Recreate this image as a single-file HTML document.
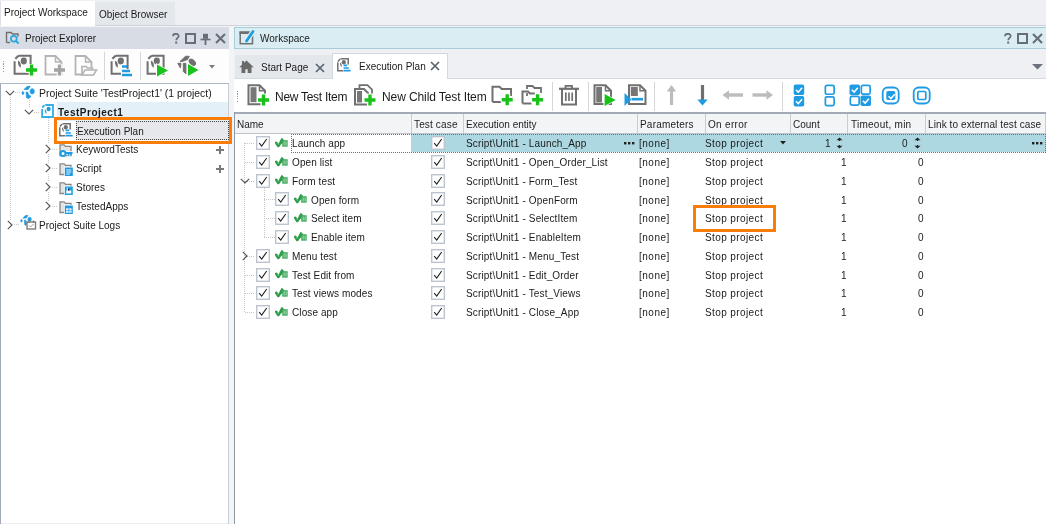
<!DOCTYPE html>
<html><head><meta charset="utf-8"><style>
html,body{margin:0;padding:0;}
body{width:1046px;height:524px;overflow:hidden;position:relative;font-family:"Liberation Sans", sans-serif;}
.t{white-space:pre;line-height:1;will-change:transform;}
div,svg{position:absolute;}
</style></head><body>
<div style="left:0px;top:0px;width:1046px;height:524px;background:#f3f4f6"></div><div style="left:0px;top:0px;width:1046px;height:26px;background:#eff0f3"></div><div style="left:0px;top:25px;width:1046px;height:1px;background:#ccd3dd"></div><div style="left:0px;top:1px;width:1px;height:25px;background:#dde1e7"></div><div style="left:1px;top:1px;width:94px;height:25px;background:#ffffff"></div><div style="left:95px;top:2px;width:80px;height:23px;background:#e4e7ec"></div><div class="t" style="left:3.5px;top:8px;font-size:10px;color:#1a1a1a;">Project Workspace</div><div class="t" style="left:99px;top:10px;font-size:10px;color:#1a1a1a;">Object Browser</div><div style="left:0px;top:27px;width:229px;height:22px;background:#d8dce4"></div><div class="t" style="left:24.5px;top:34px;font-size:10px;color:#1a1a1a;">Project Explorer</div><svg style="left:5px;top:30px" width="16" height="15" viewBox="0 0 16 15"><path d="M1.5 12.5V2.5h4.5l1.5 1.5h5.5v2.5" fill="none" stroke="#707070" stroke-width="1.4"/><path d="M1.5 12.5h3.5" stroke="#707070" stroke-width="1.4"/><circle cx="8.8" cy="8.8" r="2.9" fill="none" stroke="#29a8e0" stroke-width="1.7"/><path d="M10.8 10.8l2.8 2.8" stroke="#29a8e0" stroke-width="2"/></svg><svg style="left:172px;top:33px" width="8" height="11" viewBox="0 0 8 11"><path d="M1 3.2C1 1.5 2.2 0.8 3.8 0.8S6.7 1.6 6.7 3.1C6.7 4.8 4.2 5.1 4.2 7.2" fill="none" stroke="#676d76" stroke-width="1.7"/><rect x="3.2" y="8.6" width="2" height="2" fill="#676d76"/></svg><div style="left:185px;top:33px;width:11px;height:11px;border:2px solid #676d76;box-sizing:border-box"></div><svg style="left:200px;top:33px" width="11" height="12" viewBox="0 0 11 12"><path d="M3 0.8h5v5H3z" fill="#676d76"/><path d="M0.5 6.5h10" stroke="#676d76" stroke-width="1.6"/><path d="M5.5 6v6" stroke="#676d76" stroke-width="1.8"/></svg><svg style="left:215px;top:33px" width="11" height="11" viewBox="0 0 11 11"><path d="M1 1l9 9M10 1l-9 9" stroke="#676d76" stroke-width="2.1"/></svg><div style="left:0px;top:49px;width:229px;height:34px;background:#fdfdfd"></div><div style="left:3px;top:61.0px;width:1px;height:1.3px;background:#9a9a9a"></div><div style="left:3px;top:63.4px;width:1px;height:1.3px;background:#9a9a9a"></div><div style="left:3px;top:65.8px;width:1px;height:1.3px;background:#9a9a9a"></div><div style="left:3px;top:68.2px;width:1px;height:1.3px;background:#9a9a9a"></div><div style="left:3px;top:70.6px;width:1px;height:1.3px;background:#9a9a9a"></div><svg style="left:13px;top:54px" width="24" height="23" viewBox="0 0 24 23"><path d="M6 1.8h11.6v18H1.6V7.2" fill="none" stroke="#707070" stroke-width="2"/><path d="M5.8 1.5L2.3 4.8" stroke="#707070" stroke-width="2.2"/><ellipse cx="10.8" cy="7" rx="3.1" ry="3.4" fill="#707070"/><path d="M5 6.8c2 0.6 3.5 3.3 2.6 7c-1.6-0.8-3-3.3-2.6-7z" fill="#707070"/><path d="M18.5 10v12M12.5 16h12" stroke="#fff" stroke-width="5.5"/><path d="M18.5 10.5v11M13.0 16h11" stroke="#19c219" stroke-width="3.4"/></svg><svg style="left:44px;top:54px" width="24" height="23" viewBox="0 0 24 23"><path d="M1.5 2h10l6 6v12.5h-16z" fill="none" stroke="#b4b4b4" stroke-width="1.8"/><path d="M11.5 2v6h6" fill="none" stroke="#b4b4b4" stroke-width="1.5"/><path d="M15.5 10v12M9.5 16h12" stroke="#fff" stroke-width="5.5"/><path d="M15.5 10.5v11M10.0 16h11" stroke="#a3a3a3" stroke-width="3.4"/></svg><svg style="left:74px;top:54px" width="24" height="23" viewBox="0 0 24 23"><path d="M1.5 2h10l6 6v12.5h-16z" fill="none" stroke="#b4b4b4" stroke-width="1.8"/><path d="M11.5 2v6h6" fill="none" stroke="#b4b4b4" stroke-width="1.5"/><path d="M8 21V12.5h4l1.5 1.5h5v2" fill="#fff" stroke="#b4b4b4" stroke-width="1.6"/><path d="M8 21l3-5h11.5l-3 5z" fill="#fff" stroke="#b4b4b4" stroke-width="1.6"/></svg><div style="left:104px;top:52px;width:1px;height:28px;background:#d6d6d6"></div><svg style="left:110px;top:54px" width="23" height="23" viewBox="0 0 23 23"><path d="M6 1.8h11.6v18H1.6V7.2" fill="none" stroke="#707070" stroke-width="2"/><path d="M5.8 1.5L2.3 4.8" stroke="#707070" stroke-width="2.2"/><ellipse cx="10.8" cy="7" rx="3.1" ry="3.4" fill="#707070"/><path d="M5 6.8c2 0.6 3.5 3.3 2.6 7c-1.6-0.8-3-3.3-2.6-7z" fill="#707070"/><path d="M11 12.5h5M11 17h8M11 21h11" stroke="#fff" stroke-width="4"/><path d="M12 12.5h5M12 17h8M12 21h10" stroke="#1e9be2" stroke-width="2.4"/></svg><div style="left:140px;top:52px;width:1px;height:28px;background:#d6d6d6"></div><svg style="left:146px;top:54px" width="23" height="23" viewBox="0 0 23 23"><path d="M6 1.8h11.6v18H1.6V7.2" fill="none" stroke="#707070" stroke-width="2"/><path d="M5.8 1.5L2.3 4.8" stroke="#707070" stroke-width="2.2"/><ellipse cx="10.8" cy="7" rx="3.1" ry="3.4" fill="#707070"/><path d="M5 6.8c2 0.6 3.5 3.3 2.6 7c-1.6-0.8-3-3.3-2.6-7z" fill="#707070"/><path d="M10 9l13 7.5-13 7.5z" fill="#fff"/><path d="M11 10.5l11 6-11 6z" fill="#19c219"/></svg><svg style="left:177px;top:54px" width="23" height="23" viewBox="0 0 23 23"><g fill="#707070" stroke="#707070" stroke-width="1" stroke-linejoin="round"><path d="M3 7.5L8.5 2.3L12.3 2.3L10.5 5.5L5 7.5Z"/><ellipse cx="15.3" cy="8.3" rx="3.8" ry="2.3" transform="rotate(45 15.3 8.3)"/><path d="M0.8 9.3h3.2l-0.6 4.6z"/><path d="M6.3 9.3h2.6v10.5l-2.6-2.3z"/></g><path d="M10 8.5l13 7.5-13 7.5z" fill="#fff"/><path d="M11 10l10.5 6-10.5 6z" fill="#19c219"/></svg><svg style="left:209px;top:65px" width="6" height="4" viewBox="0 0 6 4"><path d="M0 0h6l-3 3.5z" fill="#7a7a7a"/></svg><div style="left:0px;top:83px;width:229px;height:441px;background:#ffffff"></div><div style="left:0px;top:83px;width:1px;height:441px;background:#9ea8b6"></div><div style="left:0px;top:83px;width:229px;height:1px;background:#aeb6c3"></div><div style="left:228px;top:84px;width:1px;height:440px;background:#c9ced6"></div><div style="left:1px;top:523px;width:227px;height:1px;background:#eceef1"></div><div style="left:57px;top:102px;width:171px;height:15px;background:#e3f0f7"></div><div style="left:57px;top:120px;width:172px;height:1px;background:#e3f0f7"></div><div style="left:76px;top:121px;width:153px;height:19px;background:#e6e8ec"></div><div style="left:54px;top:117px;width:178px;height:27px;border:3px solid #fa7d0a;box-sizing:border-box"></div><div style="left:76px;top:121px;width:153px;height:19px;border:1px dotted #444;box-sizing:border-box"></div><div style="left:10px;top:97px;width:1px;height:123px;background:repeating-linear-gradient(to bottom,#c6c6c6 0 1px,transparent 1px 2px)"></div><div style="left:29px;top:100px;width:1px;height:8px;background:repeating-linear-gradient(to bottom,#c6c6c6 0 1px,transparent 1px 2px)"></div><div style="left:48px;top:118px;width:1px;height:88px;background:repeating-linear-gradient(to bottom,#c6c6c6 0 1px,transparent 1px 2px)"></div><div style="left:15px;top:92px;width:6px;height:1px;background:repeating-linear-gradient(to right,#c6c6c6 0 1px,transparent 1px 2px)"></div><div style="left:34px;top:112px;width:6px;height:1px;background:repeating-linear-gradient(to right,#c6c6c6 0 1px,transparent 1px 2px)"></div><div style="left:52px;top:149px;width:6px;height:1px;background:repeating-linear-gradient(to right,#c6c6c6 0 1px,transparent 1px 2px)"></div><div style="left:52px;top:168px;width:6px;height:1px;background:repeating-linear-gradient(to right,#c6c6c6 0 1px,transparent 1px 2px)"></div><div style="left:52px;top:187px;width:6px;height:1px;background:repeating-linear-gradient(to right,#c6c6c6 0 1px,transparent 1px 2px)"></div><div style="left:52px;top:206px;width:6px;height:1px;background:repeating-linear-gradient(to right,#c6c6c6 0 1px,transparent 1px 2px)"></div><div style="left:10px;top:224px;width:10px;height:1px;background:repeating-linear-gradient(to right,#c6c6c6 0 1px,transparent 1px 2px)"></div><svg style="left:5px;top:89px" width="10" height="8" viewBox="0 0 10 8"><rect x="0" y="0" width="10" height="8" fill="#fff"/><path d="M0.8 1.8l4.2 4.2 4.2-4.2" fill="none" stroke="#555" stroke-width="1.15"/></svg><svg style="left:24px;top:108px" width="10" height="8" viewBox="0 0 10 8"><rect x="0" y="0" width="10" height="8" fill="#fff"/><path d="M0.8 1.8l4.2 4.2 4.2-4.2" fill="none" stroke="#555" stroke-width="1.15"/></svg><svg style="left:44px;top:144px" width="8" height="10" viewBox="0 0 8 10"><rect x="0" y="0" width="8" height="10" fill="#fff"/><path d="M1.8 0.8l4.2 4.2-4.2 4.2" fill="none" stroke="#555" stroke-width="1.15"/></svg><svg style="left:44px;top:163px" width="8" height="10" viewBox="0 0 8 10"><rect x="0" y="0" width="8" height="10" fill="#fff"/><path d="M1.8 0.8l4.2 4.2-4.2 4.2" fill="none" stroke="#555" stroke-width="1.15"/></svg><svg style="left:44px;top:182px" width="8" height="10" viewBox="0 0 8 10"><rect x="0" y="0" width="8" height="10" fill="#fff"/><path d="M1.8 0.8l4.2 4.2-4.2 4.2" fill="none" stroke="#555" stroke-width="1.15"/></svg><svg style="left:44px;top:201px" width="8" height="10" viewBox="0 0 8 10"><rect x="0" y="0" width="8" height="10" fill="#fff"/><path d="M1.8 0.8l4.2 4.2-4.2 4.2" fill="none" stroke="#555" stroke-width="1.15"/></svg><svg style="left:6px;top:220px" width="8" height="10" viewBox="0 0 8 10"><rect x="0" y="0" width="8" height="10" fill="#fff"/><path d="M1.8 0.8l4.2 4.2-4.2 4.2" fill="none" stroke="#555" stroke-width="1.15"/></svg><svg style="left:21px;top:85px" width="15" height="15" viewBox="0 0 15 15"><g fill="#1e9be2" stroke="#1e9be2" stroke-width="0.8" stroke-linejoin="round"><path d="M3 4.6L6 1.6L9.2 1.2L7.2 4.4Z"/><ellipse cx="11.2" cy="6.3" rx="2.1" ry="2.6"/><ellipse cx="1.9" cy="8" rx="0.9" ry="1.5"/><path d="M5.2 7L6.6 7L7.5 9.6L10 11.5L7.6 13.5L5.4 12.5Z"/></g></svg><svg style="left:41px;top:104px" width="14" height="15" viewBox="0 0 14 15"><path d="M4.3 1H12V13H1.1V5" fill="none" stroke="#35aee8" stroke-width="1.8"/><path d="M3.6 1.1L1.2 3.5" stroke="#35aee8" stroke-width="1.8"/><ellipse cx="7.6" cy="5" rx="2.1" ry="2.3" fill="#1e9be2"/><path d="M3.7 5.2c1.3 0.5 2.1 2.3 1.8 4.6c-1.2-0.6-2-2.4-1.8-4.6z" fill="#1e9be2"/></svg><svg style="left:59px;top:123px" width="15" height="15" viewBox="0 0 15 15"><path d="M3.6 0.8H11.2V6.5M0.8 4.2V12.8H6.2" fill="none" stroke="#707070" stroke-width="1.5"/><path d="M0.9 3.4L3.3 1" stroke="#707070" stroke-width="1.5"/><ellipse cx="6.8" cy="4.3" rx="2.1" ry="2.3" fill="#707070"/><path d="M3 4.6c1.3 0.5 2 2.2 1.7 4.4c-1.1-0.6-1.9-2.3-1.7-4.4z" fill="#707070"/><path d="M6.6 7.4h3.6M6.6 10h5.2M6.6 12.6h7" stroke="#1e9be2" stroke-width="1.7"/></svg><svg style="left:59px;top:143px" width="14" height="14" viewBox="0 0 14 14"><path d="M1 12.5V1.8h4l1.5 1.5h5.5v9.2z" fill="#e4e4e4" stroke="#888" stroke-width="1.3"/><path d="M5 10h8.5M9.5 10v2.5M12 10v2.5" stroke="#fff" stroke-width="3.5"/><circle cx="4" cy="10.5" r="2.5" fill="#fff" stroke="#1e9be2" stroke-width="2"/><path d="M6 10h7.5M9.5 10v2.5M12 10v2.5" stroke="#1e9be2" stroke-width="1.8"/></svg><svg style="left:59px;top:162px" width="14" height="14" viewBox="0 0 14 14"><path d="M1 12.5V1.8h4l1.5 1.5h5.5v9.2z" fill="#e4e4e4" stroke="#888" stroke-width="1.3"/><rect x="5" y="4.8" width="9" height="9.2" fill="#fff"/><rect x="5.8" y="5.5" width="8" height="8.5" fill="#1e9be2"/><path d="M7.3 8h5M7.3 10h5M7.3 12h3.5" stroke="#fff" stroke-width="0.9"/></svg><svg style="left:59px;top:181px" width="14" height="14" viewBox="0 0 14 14"><path d="M1 12.5V1.8h4l1.5 1.5h5.5v9.2z" fill="#e4e4e4" stroke="#888" stroke-width="1.3"/><rect x="5" y="4.8" width="9" height="9.2" fill="#fff"/><rect x="5.8" y="5.5" width="8" height="8.5" fill="#1e9be2"/><path d="M7.3 9.5h5v3h-5z" fill="#fff"/><path d="M8.3 6.5v3.5h3" stroke="#fff" stroke-width="1"/></svg><svg style="left:59px;top:200px" width="14" height="14" viewBox="0 0 14 14"><path d="M1 12.5V1.8h4l1.5 1.5h5.5v9.2z" fill="#e4e4e4" stroke="#888" stroke-width="1.3"/><rect x="5" y="4.8" width="9" height="9.2" fill="#fff"/><rect x="5.8" y="5.5" width="8" height="8.5" fill="#1e9be2"/><rect x="7" y="8.3" width="5.6" height="4.5" fill="#dff1fb"/><path d="M7 10.5h5.6M9.8 8.3v4.5" stroke="#1e9be2" stroke-width="0.6"/></svg><svg style="left:20px;top:214px" width="17" height="16" viewBox="0 0 17 16"><g fill="#1e9be2" stroke="#1e9be2" stroke-width="0.6" stroke-linejoin="round"><path d="M2.8 4.2L5.3 1.6L8 1.3L6.4 4Z"/><ellipse cx="9.6" cy="5.3" rx="1.7" ry="2.1"/><ellipse cx="1.5" cy="6.8" rx="0.8" ry="1.3"/><path d="M4.5 6L5.7 6L6.4 8.2L7.5 9.5L5.5 11.5L4.6 10.5Z"/></g><rect x="7" y="8" width="8.5" height="7" fill="#fff" stroke="#7d7d7d" stroke-width="1.4"/><path d="M9 6.5v2.5M13.5 6.5v2.5" stroke="#7d7d7d" stroke-width="1.4"/><path d="M9 11.5l1.5 1.5 3-3" stroke="#9a9a9a" stroke-width="1" fill="none"/></svg><svg style="left:216px;top:146px" width="8" height="8" viewBox="0 0 8 8"><path d="M4 0v8M0 4h8" stroke="#7a7a7a" stroke-width="2"/></svg><svg style="left:216px;top:165px" width="8" height="8" viewBox="0 0 8 8"><path d="M4 0v8M0 4h8" stroke="#7a7a7a" stroke-width="2"/></svg><div class="t" style="left:38.5px;top:89px;font-size:10.4px;color:#1a1a1a;">Project Suite 'TestProject1' (1 project)</div><div class="t" style="left:57.5px;top:108px;font-size:10px;color:#1a1a1a;font-weight:bold;letter-spacing:0.5px">TestProject1</div><div class="t" style="left:77px;top:127px;font-size:10px;color:#1a1a1a;">Execution Plan</div><div class="t" style="left:75.5px;top:145px;font-size:10px;color:#1a1a1a;">KeywordTests</div><div class="t" style="left:75.5px;top:164px;font-size:10px;color:#1a1a1a;">Script</div><div class="t" style="left:75.5px;top:183px;font-size:10px;color:#1a1a1a;">Stores</div><div class="t" style="left:75.5px;top:202px;font-size:10px;color:#1a1a1a;">TestedApps</div><div class="t" style="left:38.5px;top:221px;font-size:10px;color:#1a1a1a;">Project Suite Logs</div><div style="left:234px;top:27px;width:812px;height:22px;background:#d9edf2;border:1px solid #a7cddb;border-right:none;box-sizing:border-box"></div><svg style="left:239px;top:30px" width="16" height="15" viewBox="0 0 16 15"><rect x="1.2" y="2.2" width="12.3" height="11.5" fill="none" stroke="#707070" stroke-width="1.5"/><rect x="0.5" y="1.5" width="10" height="2.5" fill="#707070"/><path d="M7.2 11.2L14.2 1.2" stroke="#d9edf2" stroke-width="5"/><path d="M7.5 11L14 1.5" stroke="#1e9be2" stroke-width="2.7" stroke-linecap="round"/></svg><div class="t" style="left:259.5px;top:34px;font-size:10px;color:#1a1a1a;">Workspace</div><svg style="left:1004px;top:33px" width="8" height="11" viewBox="0 0 8 11"><path d="M1 3.2C1 1.5 2.2 0.8 3.8 0.8S6.7 1.6 6.7 3.1C6.7 4.8 4.2 5.1 4.2 7.2" fill="none" stroke="#676d76" stroke-width="1.7"/><rect x="3.2" y="8.6" width="2" height="2" fill="#676d76"/></svg><div style="left:1017px;top:33px;width:11px;height:11px;border:2px solid #676d76;box-sizing:border-box"></div><svg style="left:1032px;top:33px" width="11" height="11" viewBox="0 0 11 11"><path d="M1 1l9 9M10 1l-9 9" stroke="#676d76" stroke-width="2.1"/></svg><div style="left:234px;top:49px;width:812px;height:30px;background:#eff0f3"></div><div style="left:234px;top:78px;width:812px;height:1px;background:#d5dae1"></div><div style="left:235px;top:55px;width:97px;height:23px;background:#e4e7ec"></div><div style="left:332px;top:53px;width:116px;height:26px;background:#ffffff;border:1px solid #d3d8df;border-bottom:none;box-sizing:border-box"></div><svg style="left:239px;top:60px" width="15" height="13" viewBox="0 0 15 13"><path d="M7.5 0.5L0.3 7.2h2.2v5.8h3.8v-3.8h2.4v3.8h3.8V7.2h2.2z" fill="#6a6a6a"/><rect x="3" y="1" width="2" height="4" fill="#6a6a6a"/></svg><div class="t" style="left:261px;top:63px;font-size:10px;color:#1a1a1a;">Start Page</div><svg style="left:315px;top:63px" width="10" height="10" viewBox="0 0 10 10"><path d="M1 1l8 8M9 1l-8 8" stroke="#5c636d" stroke-width="1.7"/></svg><svg style="left:337px;top:58px" width="15" height="15" viewBox="0 0 15 15"><path d="M3.6 0.8H11.2V6.5M0.8 4.2V12.8H6.2" fill="none" stroke="#707070" stroke-width="1.5"/><path d="M0.9 3.4L3.3 1" stroke="#707070" stroke-width="1.5"/><ellipse cx="6.8" cy="4.3" rx="2.1" ry="2.3" fill="#707070"/><path d="M3 4.6c1.3 0.5 2 2.2 1.7 4.4c-1.1-0.6-1.9-2.3-1.7-4.4z" fill="#707070"/><path d="M6.6 7.4h3.6M6.6 10h5.2M6.6 12.6h7" stroke="#1e9be2" stroke-width="1.7"/></svg><div class="t" style="left:359px;top:62px;font-size:10px;color:#1a1a1a;">Execution Plan</div><svg style="left:430px;top:61px" width="10" height="10" viewBox="0 0 10 10"><path d="M1 1l8 8M9 1l-8 8" stroke="#5c636d" stroke-width="1.7"/></svg><svg style="left:1032px;top:64px" width="11" height="6" viewBox="0 0 11 6"><path d="M0 0h11l-5.5 5.5z" fill="#6b727c"/></svg><div style="left:234px;top:79px;width:812px;height:34px;background:#ffffff"></div><div style="left:237px;top:91.0px;width:1px;height:1.3px;background:#9a9a9a"></div><div style="left:237px;top:93.4px;width:1px;height:1.3px;background:#9a9a9a"></div><div style="left:237px;top:95.8px;width:1px;height:1.3px;background:#9a9a9a"></div><div style="left:237px;top:98.2px;width:1px;height:1.3px;background:#9a9a9a"></div><div style="left:237px;top:100.6px;width:1px;height:1.3px;background:#9a9a9a"></div><svg style="left:247px;top:84px" width="24" height="23" viewBox="0 0 24 23"><path d="M1.5 1.2h11l5.5 5.5v13.5H1.5z" fill="#fff" stroke="#707070" stroke-width="2"/><path d="M12.5 1.2v5.5h5.5" fill="none" stroke="#707070" stroke-width="1.6"/><rect x="3.5" y="3.2" width="6" height="15" fill="#777"/><path d="M16.5 9.5v13M10.0 16h13" stroke="#fff" stroke-width="6"/><path d="M16.5 10.5v11M11.0 16h11" stroke="#19c219" stroke-width="3.4"/></svg><div class="t" style="left:274.5px;top:91px;font-size:12px;color:#1a1a1a;letter-spacing:-0.28px">New Test Item</div><svg style="left:353px;top:84px" width="25" height="23" viewBox="0 0 25 23"><path d="M6.5 1.2h8l4.5 4.5v9H6.5z" fill="#fff" stroke="#707070" stroke-width="1.8"/><path d="M2 5h9l4 4v11.5H2z" fill="#fff" stroke="#707070" stroke-width="2"/><rect x="4" y="7" width="5" height="11.5" fill="#777"/><path d="M17 9.5v13M10.5 16h13" stroke="#fff" stroke-width="6"/><path d="M17 10.5v11M11.5 16h11" stroke="#19c219" stroke-width="3.4"/></svg><div class="t" style="left:381.5px;top:91px;font-size:12px;color:#1a1a1a;letter-spacing:-0.1px">New Child Test Item</div><svg style="left:491px;top:85px" width="24" height="22" viewBox="0 0 24 22"><path d="M1.5 17V1.8h7l2.2 2.2h9.3v7" fill="none" stroke="#707070" stroke-width="2"/><path d="M1.5 17h9" stroke="#707070" stroke-width="2"/><path d="M16.2 8.2v13M9.7 14.7h13" stroke="#fff" stroke-width="6"/><path d="M16.2 9.2v11M10.7 14.7h11" stroke="#19c219" stroke-width="3.4"/></svg><svg style="left:521px;top:84px" width="25" height="23" viewBox="0 0 25 23"><path d="M6 12V2h5.5l2 2h6.5v5" fill="none" stroke="#707070" stroke-width="1.8"/><path d="M1.5 19.5V7h6l2 2h4" fill="none" stroke="#fff" stroke-width="4"/><path d="M1.5 19.5V7.5h5.5l2 2h5" fill="none" stroke="#707070" stroke-width="2"/><path d="M1.5 19.5h9" stroke="#707070" stroke-width="2"/><path d="M16.6 9.2v13M10.100000000000001 15.7h13" stroke="#fff" stroke-width="6"/><path d="M16.6 10.2v11M11.100000000000001 15.7h11" stroke="#19c219" stroke-width="3.4"/></svg><div style="left:552px;top:82px;width:1px;height:29px;background:#d6d6d6"></div><svg style="left:558px;top:84px" width="22" height="23" viewBox="0 0 22 23"><path d="M1 4.8h20" stroke="#707070" stroke-width="2.2"/><path d="M7.5 4V1.8h6.5V4" fill="none" stroke="#707070" stroke-width="1.8"/><path d="M4 5v15.5h14V5" fill="none" stroke="#707070" stroke-width="2"/><path d="M7.8 8.5v8.5M11 8.5v8.5M14.2 8.5v8.5" stroke="#707070" stroke-width="1.7"/></svg><div style="left:588px;top:82px;width:1px;height:29px;background:#d6d6d6"></div><svg style="left:593px;top:84px" width="24" height="23" viewBox="0 0 24 23"><path d="M1.5 1.2h11l5.5 5.5v13.3H1.5z" fill="#fff" stroke="#707070" stroke-width="2"/><path d="M12.5 1.2v5.5h5.5" fill="none" stroke="#707070" stroke-width="1.5"/><rect x="3.2" y="3" width="5.8" height="15.5" fill="#777"/><path d="M10.5 8.5l13 7.5-13 7.5z" fill="#fff"/><path d="M11.6 10l11 6-11 6z" fill="#19c219"/></svg><svg style="left:624px;top:84px" width="24" height="23" viewBox="0 0 24 23"><path d="M5 1.2h11l5.5 5.5v13.3H5z" fill="#fff" stroke="#707070" stroke-width="2"/><path d="M16 1.2v5.5h5.5" fill="none" stroke="#707070" stroke-width="1.5"/><rect x="6.8" y="3" width="7" height="9" fill="#777"/><path d="M0.5 9l7 6.5-7 6.5z" fill="#1e9be2"/><path d="M7 15.2h12" stroke="#fff" stroke-width="4.5"/><path d="M7.5 15.2h11.5" stroke="#1e9be2" stroke-width="2.6"/></svg><div style="left:654px;top:82px;width:1px;height:29px;background:#d6d6d6"></div><svg style="left:666px;top:84px" width="11" height="22" viewBox="0 0 11 22"><path d="M5.5 6v15" stroke="#bcbcbc" stroke-width="3.2"/><path d="M0.8 7.5L5.5 1l4.7 6.5z" fill="#bcbcbc"/></svg><svg style="left:697px;top:84px" width="11" height="22" viewBox="0 0 11 22"><path d="M5.5 1v15" stroke="#6f6f6f" stroke-width="3.2"/><path d="M0.3 15.5h10.4l-5.2 6z" fill="#1e9be2"/></svg><svg style="left:722px;top:90px" width="21" height="10" viewBox="0 0 21 10"><path d="M6 5h15" stroke="#bcbcbc" stroke-width="3.4"/><path d="M7 0.2L0.5 5 7 9.8z" fill="#bcbcbc"/></svg><svg style="left:752px;top:90px" width="22" height="10" viewBox="0 0 22 10"><path d="M0.5 5h15" stroke="#bcbcbc" stroke-width="3.4"/><path d="M14.5 0.2L21 5 14.5 9.8z" fill="#bcbcbc"/></svg><div style="left:782px;top:82px;width:1px;height:29px;background:#d6d6d6"></div><svg style="left:793px;top:84px" width="12" height="23" viewBox="0 0 12 23"><rect x="0.7" y="0.6" width="10.5" height="10.5" fill="#1e9be2" rx="1.8"/><path d="M3.0 5.8999999999999995l2.3 2.3 3.8-4.4" stroke="#fff" stroke-width="1.5" fill="none"/><rect x="0.7" y="12" width="10.5" height="10.5" fill="#1e9be2" rx="1.8"/><path d="M3.0 17.3l2.3 2.3 3.8-4.4" stroke="#fff" stroke-width="1.5" fill="none"/></svg><svg style="left:824px;top:84px" width="12" height="23" viewBox="0 0 12 23"><rect x="1.35" y="1.45" width="8.8" height="8.8" fill="none" stroke="#1e9be2" stroke-width="1.7" rx="1.6"/><rect x="1.35" y="12.85" width="8.8" height="8.8" fill="none" stroke="#1e9be2" stroke-width="1.7" rx="1.6"/></svg><svg style="left:849px;top:84px" width="23" height="23" viewBox="0 0 23 23"><rect x="0.5" y="0.5" width="10.5" height="10.5" fill="#1e9be2" rx="1.8"/><path d="M2.8 5.8l2.3 2.3 3.8-4.4" stroke="#fff" stroke-width="1.5" fill="none"/><rect x="12.35" y="1.35" width="8.8" height="8.8" fill="none" stroke="#1e9be2" stroke-width="1.7" rx="1.6"/><rect x="1.35" y="12.35" width="8.8" height="8.8" fill="none" stroke="#1e9be2" stroke-width="1.7" rx="1.6"/><rect x="11.5" y="11.5" width="10.5" height="10.5" fill="#1e9be2" rx="1.8"/><path d="M13.8 16.8l2.3 2.3 3.8-4.4" stroke="#fff" stroke-width="1.5" fill="none"/></svg><svg style="left:881px;top:86px" width="19" height="19" viewBox="0 0 19 19"><rect x="1.7" y="1.5" width="16" height="16" rx="5" fill="none" stroke="#1e9be2" stroke-width="1.8"/><rect x="5.3" y="5" width="9" height="9" fill="#1e9be2" rx="1.8"/><path d="M7.6 10.3l2.3 2.3 3.8-4.4" stroke="#fff" stroke-width="1.5" fill="none"/></svg><svg style="left:912px;top:86px" width="19" height="19" viewBox="0 0 19 19"><rect x="1.7" y="1.5" width="16" height="16" rx="5" fill="none" stroke="#1e9be2" stroke-width="1.8"/><rect x="5.8" y="5.5" width="8" height="8" rx="1.2" fill="none" stroke="#1e9be2" stroke-width="1.7"/></svg><div style="left:234px;top:112px;width:812px;height:412px;background:#ffffff"></div><div style="left:234px;top:112px;width:812px;height:2px;background:#a3aab5"></div><div style="left:234px;top:112px;width:1px;height:412px;background:#8f99a7"></div><div style="left:235px;top:114px;width:811px;height:19px;background:#f3f4f6"></div><div style="left:235px;top:133px;width:811px;height:1px;background:#bfc4cb"></div><div style="left:411px;top:114px;width:1px;height:19px;background:#c8cdd3"></div><div style="left:463px;top:114px;width:1px;height:19px;background:#c8cdd3"></div><div style="left:637px;top:114px;width:1px;height:19px;background:#c8cdd3"></div><div style="left:705px;top:114px;width:1px;height:19px;background:#c8cdd3"></div><div style="left:790px;top:114px;width:1px;height:19px;background:#c8cdd3"></div><div style="left:847px;top:114px;width:1px;height:19px;background:#c8cdd3"></div><div style="left:925px;top:114px;width:1px;height:19px;background:#c8cdd3"></div><div style="left:1045px;top:114px;width:1px;height:19px;background:#c8cdd3"></div><div class="t" style="left:237px;top:120px;font-size:10px;color:#1e1e1e;">Name</div><div class="t" style="left:413.5px;top:120px;font-size:10px;color:#1e1e1e;letter-spacing:0.15px">Test case</div><div class="t" style="left:465.5px;top:120px;font-size:10px;color:#1e1e1e;">Execution entity</div><div class="t" style="left:639.5px;top:120px;font-size:10px;color:#1e1e1e;letter-spacing:0.2px">Parameters</div><div class="t" style="left:707.5px;top:120px;font-size:10px;color:#1e1e1e;letter-spacing:0.3px">On error</div><div class="t" style="left:792.5px;top:120px;font-size:10px;color:#1e1e1e;">Count</div><div class="t" style="left:850.5px;top:120px;font-size:10px;color:#1e1e1e;letter-spacing:0.25px">Timeout, min</div><div class="t" style="left:927.5px;top:120px;font-size:10px;color:#1e1e1e;letter-spacing:0.1px">Link to external test case</div><div style="left:411px;top:134px;width:635px;height:18px;background:#add8e1"></div><div style="left:291px;top:134px;width:755px;height:1px;background:repeating-linear-gradient(to right,#707070 0 1px,transparent 1px 2px)"></div><div style="left:291px;top:152px;width:755px;height:1px;background:repeating-linear-gradient(to right,#707070 0 1px,transparent 1px 2px)"></div><div style="left:291px;top:134px;width:1px;height:18px;background:repeating-linear-gradient(to bottom,#707070 0 1px,transparent 1px 2px)"></div><div style="left:1045px;top:134px;width:1px;height:18px;background:repeating-linear-gradient(to bottom,#707070 0 1px,transparent 1px 2px)"></div><div style="left:244px;top:143px;width:1px;height:170px;background:repeating-linear-gradient(to bottom,#c6c6c6 0 1px,transparent 1px 2px)"></div><svg style="left:256px;top:136px" width="14" height="14" viewBox="0 0 14 14"><rect x="0.7" y="0.7" width="12.6" height="12.6" fill="#fff" stroke="#bcc4d0" stroke-width="1.4"/><path d="M3.2 7.2l2.5 2.8 5-7" fill="none" stroke="#1e1e1e" stroke-width="1.1"/></svg><svg style="left:275px;top:137px" width="13" height="11" viewBox="0 0 13 11"><path d="M1.2 5.8L3.3 9L6.3 4.8" fill="none" stroke="#2b9d49" stroke-width="2.6" stroke-linecap="round" stroke-linejoin="round"/><path d="M4.6 4.3L6.8 0.8L9.3 3.3L8.5 6.2L5.8 6.8Z" fill="#2b9d49"/><rect x="7.2" y="3.2" width="5.5" height="6.5" fill="#45ad61"/><path d="M9.2 4.6v3.8M11.1 4.6v3.8" stroke="#bfe5c8" stroke-width="0.8"/><path d="M2.6 6.2l1 1.3" stroke="#cdebd5" stroke-width="0.7"/></svg><div class="t" style="left:291.5px;top:139px;font-size:10px;color:#1a1a1a;letter-spacing:0.1px">Launch app</div><div style="left:245px;top:143px;width:10px;height:1px;background:repeating-linear-gradient(to right,#c6c6c6 0 1px,transparent 1px 2px)"></div><svg style="left:431px;top:136px" width="14" height="14" viewBox="0 0 14 14"><rect x="0.7" y="0.7" width="12.6" height="12.6" fill="#fff" stroke="#bcc4d0" stroke-width="1.4"/><path d="M3.2 7.2l2.5 2.8 5-7" fill="none" stroke="#1e1e1e" stroke-width="1.1"/></svg><div class="t" style="left:465.5px;top:139px;font-size:10px;color:#1a1a1a;letter-spacing:0.15px">Script\Unit1 - Launch_App</div><div class="t" style="left:639px;top:139px;font-size:10px;color:#1a1a1a;letter-spacing:0.5px">[none]</div><div class="t" style="left:705px;top:139px;font-size:10px;color:#1a1a1a;letter-spacing:0.4px">Stop project</div><svg style="left:256px;top:155px" width="14" height="14" viewBox="0 0 14 14"><rect x="0.7" y="0.7" width="12.6" height="12.6" fill="#fff" stroke="#bcc4d0" stroke-width="1.4"/><path d="M3.2 7.2l2.5 2.8 5-7" fill="none" stroke="#1e1e1e" stroke-width="1.1"/></svg><svg style="left:275px;top:156px" width="13" height="11" viewBox="0 0 13 11"><path d="M1.2 5.8L3.3 9L6.3 4.8" fill="none" stroke="#2b9d49" stroke-width="2.6" stroke-linecap="round" stroke-linejoin="round"/><path d="M4.6 4.3L6.8 0.8L9.3 3.3L8.5 6.2L5.8 6.8Z" fill="#2b9d49"/><rect x="7.2" y="3.2" width="5.5" height="6.5" fill="#45ad61"/><path d="M9.2 4.6v3.8M11.1 4.6v3.8" stroke="#bfe5c8" stroke-width="0.8"/><path d="M2.6 6.2l1 1.3" stroke="#cdebd5" stroke-width="0.7"/></svg><div class="t" style="left:291.5px;top:158px;font-size:10px;color:#1a1a1a;letter-spacing:0.1px">Open list</div><div style="left:245px;top:162px;width:10px;height:1px;background:repeating-linear-gradient(to right,#c6c6c6 0 1px,transparent 1px 2px)"></div><svg style="left:431px;top:155px" width="14" height="14" viewBox="0 0 14 14"><rect x="0.7" y="0.7" width="12.6" height="12.6" fill="#fff" stroke="#bcc4d0" stroke-width="1.4"/><path d="M3.2 7.2l2.5 2.8 5-7" fill="none" stroke="#1e1e1e" stroke-width="1.1"/></svg><div class="t" style="left:465.5px;top:158px;font-size:10px;color:#1a1a1a;letter-spacing:0.15px">Script\Unit1 - Open_Order_List</div><div class="t" style="left:639px;top:158px;font-size:10px;color:#1a1a1a;letter-spacing:0.5px">[none]</div><div class="t" style="left:705px;top:158px;font-size:10px;color:#1a1a1a;letter-spacing:0.4px">Stop project</div><div class="t" style="left:841px;top:158px;font-size:10px;color:#1a1a1a;">1</div><div class="t" style="left:918px;top:158px;font-size:10px;color:#1a1a1a;">0</div><svg style="left:256px;top:174px" width="14" height="14" viewBox="0 0 14 14"><rect x="0.7" y="0.7" width="12.6" height="12.6" fill="#fff" stroke="#bcc4d0" stroke-width="1.4"/><path d="M3.2 7.2l2.5 2.8 5-7" fill="none" stroke="#1e1e1e" stroke-width="1.1"/></svg><svg style="left:275px;top:174px" width="13" height="11" viewBox="0 0 13 11"><path d="M1.2 5.8L3.3 9L6.3 4.8" fill="none" stroke="#2b9d49" stroke-width="2.6" stroke-linecap="round" stroke-linejoin="round"/><path d="M4.6 4.3L6.8 0.8L9.3 3.3L8.5 6.2L5.8 6.8Z" fill="#2b9d49"/><rect x="7.2" y="3.2" width="5.5" height="6.5" fill="#45ad61"/><path d="M9.2 4.6v3.8M11.1 4.6v3.8" stroke="#bfe5c8" stroke-width="0.8"/><path d="M2.6 6.2l1 1.3" stroke="#cdebd5" stroke-width="0.7"/></svg><div class="t" style="left:291.5px;top:177px;font-size:10px;color:#1a1a1a;letter-spacing:0.1px">Form test</div><div style="left:245px;top:181px;width:10px;height:1px;background:repeating-linear-gradient(to right,#c6c6c6 0 1px,transparent 1px 2px)"></div><svg style="left:431px;top:174px" width="14" height="14" viewBox="0 0 14 14"><rect x="0.7" y="0.7" width="12.6" height="12.6" fill="#fff" stroke="#bcc4d0" stroke-width="1.4"/><path d="M3.2 7.2l2.5 2.8 5-7" fill="none" stroke="#1e1e1e" stroke-width="1.1"/></svg><div class="t" style="left:465.5px;top:177px;font-size:10px;color:#1a1a1a;letter-spacing:0.15px">Script\Unit1 - Form_Test</div><div class="t" style="left:639px;top:177px;font-size:10px;color:#1a1a1a;letter-spacing:0.5px">[none]</div><div class="t" style="left:705px;top:177px;font-size:10px;color:#1a1a1a;letter-spacing:0.4px">Stop project</div><div class="t" style="left:841px;top:177px;font-size:10px;color:#1a1a1a;">1</div><div class="t" style="left:918px;top:177px;font-size:10px;color:#1a1a1a;">0</div><svg style="left:275px;top:192px" width="14" height="14" viewBox="0 0 14 14"><rect x="0.7" y="0.7" width="12.6" height="12.6" fill="#fff" stroke="#bcc4d0" stroke-width="1.4"/><path d="M3.2 7.2l2.5 2.8 5-7" fill="none" stroke="#1e1e1e" stroke-width="1.1"/></svg><svg style="left:294px;top:193px" width="13" height="11" viewBox="0 0 13 11"><path d="M1.2 5.8L3.3 9L6.3 4.8" fill="none" stroke="#2b9d49" stroke-width="2.6" stroke-linecap="round" stroke-linejoin="round"/><path d="M4.6 4.3L6.8 0.8L9.3 3.3L8.5 6.2L5.8 6.8Z" fill="#2b9d49"/><rect x="7.2" y="3.2" width="5.5" height="6.5" fill="#45ad61"/><path d="M9.2 4.6v3.8M11.1 4.6v3.8" stroke="#bfe5c8" stroke-width="0.8"/><path d="M2.6 6.2l1 1.3" stroke="#cdebd5" stroke-width="0.7"/></svg><div class="t" style="left:310.5px;top:196px;font-size:10px;color:#1a1a1a;letter-spacing:0.1px">Open form</div><div style="left:264px;top:199px;width:11px;height:1px;background:repeating-linear-gradient(to right,#c6c6c6 0 1px,transparent 1px 2px)"></div><svg style="left:431px;top:192px" width="14" height="14" viewBox="0 0 14 14"><rect x="0.7" y="0.7" width="12.6" height="12.6" fill="#fff" stroke="#bcc4d0" stroke-width="1.4"/><path d="M3.2 7.2l2.5 2.8 5-7" fill="none" stroke="#1e1e1e" stroke-width="1.1"/></svg><div class="t" style="left:465.5px;top:196px;font-size:10px;color:#1a1a1a;letter-spacing:0.15px">Script\Unit1 - OpenForm</div><div class="t" style="left:639px;top:196px;font-size:10px;color:#1a1a1a;letter-spacing:0.5px">[none]</div><div class="t" style="left:705px;top:196px;font-size:10px;color:#1a1a1a;letter-spacing:0.4px">Stop project</div><div class="t" style="left:841px;top:196px;font-size:10px;color:#1a1a1a;">1</div><div class="t" style="left:918px;top:196px;font-size:10px;color:#1a1a1a;">0</div><svg style="left:275px;top:211px" width="14" height="14" viewBox="0 0 14 14"><rect x="0.7" y="0.7" width="12.6" height="12.6" fill="#fff" stroke="#bcc4d0" stroke-width="1.4"/><path d="M3.2 7.2l2.5 2.8 5-7" fill="none" stroke="#1e1e1e" stroke-width="1.1"/></svg><svg style="left:294px;top:212px" width="13" height="11" viewBox="0 0 13 11"><path d="M1.2 5.8L3.3 9L6.3 4.8" fill="none" stroke="#2b9d49" stroke-width="2.6" stroke-linecap="round" stroke-linejoin="round"/><path d="M4.6 4.3L6.8 0.8L9.3 3.3L8.5 6.2L5.8 6.8Z" fill="#2b9d49"/><rect x="7.2" y="3.2" width="5.5" height="6.5" fill="#45ad61"/><path d="M9.2 4.6v3.8M11.1 4.6v3.8" stroke="#bfe5c8" stroke-width="0.8"/><path d="M2.6 6.2l1 1.3" stroke="#cdebd5" stroke-width="0.7"/></svg><div class="t" style="left:310.5px;top:214px;font-size:10px;color:#1a1a1a;letter-spacing:0.1px">Select item</div><div style="left:264px;top:218px;width:11px;height:1px;background:repeating-linear-gradient(to right,#c6c6c6 0 1px,transparent 1px 2px)"></div><svg style="left:431px;top:211px" width="14" height="14" viewBox="0 0 14 14"><rect x="0.7" y="0.7" width="12.6" height="12.6" fill="#fff" stroke="#bcc4d0" stroke-width="1.4"/><path d="M3.2 7.2l2.5 2.8 5-7" fill="none" stroke="#1e1e1e" stroke-width="1.1"/></svg><div class="t" style="left:465.5px;top:214px;font-size:10px;color:#1a1a1a;letter-spacing:0.15px">Script\Unit1 - SelectItem</div><div class="t" style="left:639px;top:214px;font-size:10px;color:#1a1a1a;letter-spacing:0.5px">[none]</div><div class="t" style="left:705px;top:214px;font-size:10px;color:#1a1a1a;letter-spacing:0.4px">Stop project</div><div class="t" style="left:841px;top:214px;font-size:10px;color:#1a1a1a;">1</div><div class="t" style="left:918px;top:214px;font-size:10px;color:#1a1a1a;">0</div><svg style="left:275px;top:230px" width="14" height="14" viewBox="0 0 14 14"><rect x="0.7" y="0.7" width="12.6" height="12.6" fill="#fff" stroke="#bcc4d0" stroke-width="1.4"/><path d="M3.2 7.2l2.5 2.8 5-7" fill="none" stroke="#1e1e1e" stroke-width="1.1"/></svg><svg style="left:294px;top:231px" width="13" height="11" viewBox="0 0 13 11"><path d="M1.2 5.8L3.3 9L6.3 4.8" fill="none" stroke="#2b9d49" stroke-width="2.6" stroke-linecap="round" stroke-linejoin="round"/><path d="M4.6 4.3L6.8 0.8L9.3 3.3L8.5 6.2L5.8 6.8Z" fill="#2b9d49"/><rect x="7.2" y="3.2" width="5.5" height="6.5" fill="#45ad61"/><path d="M9.2 4.6v3.8M11.1 4.6v3.8" stroke="#bfe5c8" stroke-width="0.8"/><path d="M2.6 6.2l1 1.3" stroke="#cdebd5" stroke-width="0.7"/></svg><div class="t" style="left:310.5px;top:233px;font-size:10px;color:#1a1a1a;letter-spacing:0.1px">Enable item</div><div style="left:264px;top:237px;width:11px;height:1px;background:repeating-linear-gradient(to right,#c6c6c6 0 1px,transparent 1px 2px)"></div><svg style="left:431px;top:230px" width="14" height="14" viewBox="0 0 14 14"><rect x="0.7" y="0.7" width="12.6" height="12.6" fill="#fff" stroke="#bcc4d0" stroke-width="1.4"/><path d="M3.2 7.2l2.5 2.8 5-7" fill="none" stroke="#1e1e1e" stroke-width="1.1"/></svg><div class="t" style="left:465.5px;top:233px;font-size:10px;color:#1a1a1a;letter-spacing:0.15px">Script\Unit1 - EnableItem</div><div class="t" style="left:639px;top:233px;font-size:10px;color:#1a1a1a;letter-spacing:0.5px">[none]</div><div class="t" style="left:705px;top:233px;font-size:10px;color:#1a1a1a;letter-spacing:0.4px">Stop project</div><div class="t" style="left:841px;top:233px;font-size:10px;color:#1a1a1a;">1</div><div class="t" style="left:918px;top:233px;font-size:10px;color:#1a1a1a;">0</div><svg style="left:256px;top:249px" width="14" height="14" viewBox="0 0 14 14"><rect x="0.7" y="0.7" width="12.6" height="12.6" fill="#fff" stroke="#bcc4d0" stroke-width="1.4"/><path d="M3.2 7.2l2.5 2.8 5-7" fill="none" stroke="#1e1e1e" stroke-width="1.1"/></svg><svg style="left:275px;top:249px" width="13" height="11" viewBox="0 0 13 11"><path d="M1.2 5.8L3.3 9L6.3 4.8" fill="none" stroke="#2b9d49" stroke-width="2.6" stroke-linecap="round" stroke-linejoin="round"/><path d="M4.6 4.3L6.8 0.8L9.3 3.3L8.5 6.2L5.8 6.8Z" fill="#2b9d49"/><rect x="7.2" y="3.2" width="5.5" height="6.5" fill="#45ad61"/><path d="M9.2 4.6v3.8M11.1 4.6v3.8" stroke="#bfe5c8" stroke-width="0.8"/><path d="M2.6 6.2l1 1.3" stroke="#cdebd5" stroke-width="0.7"/></svg><div class="t" style="left:291.5px;top:252px;font-size:10px;color:#1a1a1a;letter-spacing:0.1px">Menu test</div><div style="left:245px;top:256px;width:10px;height:1px;background:repeating-linear-gradient(to right,#c6c6c6 0 1px,transparent 1px 2px)"></div><svg style="left:431px;top:249px" width="14" height="14" viewBox="0 0 14 14"><rect x="0.7" y="0.7" width="12.6" height="12.6" fill="#fff" stroke="#bcc4d0" stroke-width="1.4"/><path d="M3.2 7.2l2.5 2.8 5-7" fill="none" stroke="#1e1e1e" stroke-width="1.1"/></svg><div class="t" style="left:465.5px;top:252px;font-size:10px;color:#1a1a1a;letter-spacing:0.15px">Script\Unit1 - Menu_Test</div><div class="t" style="left:639px;top:252px;font-size:10px;color:#1a1a1a;letter-spacing:0.5px">[none]</div><div class="t" style="left:705px;top:252px;font-size:10px;color:#1a1a1a;letter-spacing:0.4px">Stop project</div><div class="t" style="left:841px;top:252px;font-size:10px;color:#1a1a1a;">1</div><div class="t" style="left:918px;top:252px;font-size:10px;color:#1a1a1a;">0</div><svg style="left:256px;top:268px" width="14" height="14" viewBox="0 0 14 14"><rect x="0.7" y="0.7" width="12.6" height="12.6" fill="#fff" stroke="#bcc4d0" stroke-width="1.4"/><path d="M3.2 7.2l2.5 2.8 5-7" fill="none" stroke="#1e1e1e" stroke-width="1.1"/></svg><svg style="left:275px;top:268px" width="13" height="11" viewBox="0 0 13 11"><path d="M1.2 5.8L3.3 9L6.3 4.8" fill="none" stroke="#2b9d49" stroke-width="2.6" stroke-linecap="round" stroke-linejoin="round"/><path d="M4.6 4.3L6.8 0.8L9.3 3.3L8.5 6.2L5.8 6.8Z" fill="#2b9d49"/><rect x="7.2" y="3.2" width="5.5" height="6.5" fill="#45ad61"/><path d="M9.2 4.6v3.8M11.1 4.6v3.8" stroke="#bfe5c8" stroke-width="0.8"/><path d="M2.6 6.2l1 1.3" stroke="#cdebd5" stroke-width="0.7"/></svg><div class="t" style="left:291.5px;top:271px;font-size:10px;color:#1a1a1a;letter-spacing:0.1px">Test Edit from</div><div style="left:245px;top:275px;width:10px;height:1px;background:repeating-linear-gradient(to right,#c6c6c6 0 1px,transparent 1px 2px)"></div><svg style="left:431px;top:268px" width="14" height="14" viewBox="0 0 14 14"><rect x="0.7" y="0.7" width="12.6" height="12.6" fill="#fff" stroke="#bcc4d0" stroke-width="1.4"/><path d="M3.2 7.2l2.5 2.8 5-7" fill="none" stroke="#1e1e1e" stroke-width="1.1"/></svg><div class="t" style="left:465.5px;top:271px;font-size:10px;color:#1a1a1a;letter-spacing:0.15px">Script\Unit1 - Edit_Order</div><div class="t" style="left:639px;top:271px;font-size:10px;color:#1a1a1a;letter-spacing:0.5px">[none]</div><div class="t" style="left:705px;top:271px;font-size:10px;color:#1a1a1a;letter-spacing:0.4px">Stop project</div><div class="t" style="left:841px;top:271px;font-size:10px;color:#1a1a1a;">1</div><div class="t" style="left:918px;top:271px;font-size:10px;color:#1a1a1a;">0</div><svg style="left:256px;top:286px" width="14" height="14" viewBox="0 0 14 14"><rect x="0.7" y="0.7" width="12.6" height="12.6" fill="#fff" stroke="#bcc4d0" stroke-width="1.4"/><path d="M3.2 7.2l2.5 2.8 5-7" fill="none" stroke="#1e1e1e" stroke-width="1.1"/></svg><svg style="left:275px;top:287px" width="13" height="11" viewBox="0 0 13 11"><path d="M1.2 5.8L3.3 9L6.3 4.8" fill="none" stroke="#2b9d49" stroke-width="2.6" stroke-linecap="round" stroke-linejoin="round"/><path d="M4.6 4.3L6.8 0.8L9.3 3.3L8.5 6.2L5.8 6.8Z" fill="#2b9d49"/><rect x="7.2" y="3.2" width="5.5" height="6.5" fill="#45ad61"/><path d="M9.2 4.6v3.8M11.1 4.6v3.8" stroke="#bfe5c8" stroke-width="0.8"/><path d="M2.6 6.2l1 1.3" stroke="#cdebd5" stroke-width="0.7"/></svg><div class="t" style="left:291.5px;top:289px;font-size:10px;color:#1a1a1a;letter-spacing:0.1px">Test views modes</div><div style="left:245px;top:293px;width:10px;height:1px;background:repeating-linear-gradient(to right,#c6c6c6 0 1px,transparent 1px 2px)"></div><svg style="left:431px;top:286px" width="14" height="14" viewBox="0 0 14 14"><rect x="0.7" y="0.7" width="12.6" height="12.6" fill="#fff" stroke="#bcc4d0" stroke-width="1.4"/><path d="M3.2 7.2l2.5 2.8 5-7" fill="none" stroke="#1e1e1e" stroke-width="1.1"/></svg><div class="t" style="left:465.5px;top:289px;font-size:10px;color:#1a1a1a;letter-spacing:0.15px">Script\Unit1 - Test_Views</div><div class="t" style="left:639px;top:289px;font-size:10px;color:#1a1a1a;letter-spacing:0.5px">[none]</div><div class="t" style="left:705px;top:289px;font-size:10px;color:#1a1a1a;letter-spacing:0.4px">Stop project</div><div class="t" style="left:841px;top:289px;font-size:10px;color:#1a1a1a;">1</div><div class="t" style="left:918px;top:289px;font-size:10px;color:#1a1a1a;">0</div><svg style="left:256px;top:305px" width="14" height="14" viewBox="0 0 14 14"><rect x="0.7" y="0.7" width="12.6" height="12.6" fill="#fff" stroke="#bcc4d0" stroke-width="1.4"/><path d="M3.2 7.2l2.5 2.8 5-7" fill="none" stroke="#1e1e1e" stroke-width="1.1"/></svg><svg style="left:275px;top:306px" width="13" height="11" viewBox="0 0 13 11"><path d="M1.2 5.8L3.3 9L6.3 4.8" fill="none" stroke="#2b9d49" stroke-width="2.6" stroke-linecap="round" stroke-linejoin="round"/><path d="M4.6 4.3L6.8 0.8L9.3 3.3L8.5 6.2L5.8 6.8Z" fill="#2b9d49"/><rect x="7.2" y="3.2" width="5.5" height="6.5" fill="#45ad61"/><path d="M9.2 4.6v3.8M11.1 4.6v3.8" stroke="#bfe5c8" stroke-width="0.8"/><path d="M2.6 6.2l1 1.3" stroke="#cdebd5" stroke-width="0.7"/></svg><div class="t" style="left:291.5px;top:308px;font-size:10px;color:#1a1a1a;letter-spacing:0.1px">Close app</div><div style="left:245px;top:312px;width:10px;height:1px;background:repeating-linear-gradient(to right,#c6c6c6 0 1px,transparent 1px 2px)"></div><svg style="left:431px;top:305px" width="14" height="14" viewBox="0 0 14 14"><rect x="0.7" y="0.7" width="12.6" height="12.6" fill="#fff" stroke="#bcc4d0" stroke-width="1.4"/><path d="M3.2 7.2l2.5 2.8 5-7" fill="none" stroke="#1e1e1e" stroke-width="1.1"/></svg><div class="t" style="left:465.5px;top:308px;font-size:10px;color:#1a1a1a;letter-spacing:0.15px">Script\Unit1 - Close_App</div><div class="t" style="left:639px;top:308px;font-size:10px;color:#1a1a1a;letter-spacing:0.5px">[none]</div><div class="t" style="left:705px;top:308px;font-size:10px;color:#1a1a1a;letter-spacing:0.4px">Stop project</div><div class="t" style="left:841px;top:308px;font-size:10px;color:#1a1a1a;">1</div><div class="t" style="left:918px;top:308px;font-size:10px;color:#1a1a1a;">0</div><div style="left:264px;top:188px;width:1px;height:50px;background:repeating-linear-gradient(to bottom,#c6c6c6 0 1px,transparent 1px 2px)"></div><svg style="left:240px;top:178px" width="10" height="6" viewBox="0 0 10 6"><path d="M0.8 0.8l4.2 4.2 4.2-4.2" fill="none" stroke="#555" stroke-width="1.15"/></svg><svg style="left:242px;top:251px" width="6" height="10" viewBox="0 0 6 10"><path d="M0.8 0.8l4.2 4.2-4.2 4.2" fill="none" stroke="#555" stroke-width="1.15"/></svg><svg style="left:624px;top:142px" width="11" height="3" viewBox="0 0 11 3"><rect x="0" y="0" width="2.4" height="2.4" fill="#222"/><rect x="4" y="0" width="2.4" height="2.4" fill="#222"/><rect x="8" y="0" width="2.4" height="2.4" fill="#222"/></svg><svg style="left:1032px;top:142px" width="11" height="3" viewBox="0 0 11 3"><rect x="0" y="0" width="2.4" height="2.4" fill="#222"/><rect x="4" y="0" width="2.4" height="2.4" fill="#222"/><rect x="8" y="0" width="2.4" height="2.4" fill="#222"/></svg><svg style="left:780px;top:141px" width="6" height="4" viewBox="0 0 6 4"><path d="M0 0h6l-3 3.5z" fill="#222"/></svg><div class="t" style="left:824.5px;top:139px;font-size:10px;color:#1a1a1a;">1</div><div class="t" style="left:902px;top:139px;font-size:10px;color:#1a1a1a;">0</div><svg style="left:836px;top:137px" width="7" height="12" viewBox="0 0 7 12"><path d="M0.5 3.2L3.5 0.5 6.5 3.2z" fill="#222"/><path d="M3.5 2v2" stroke="#222" stroke-width="1"/><path d="M0.5 8.8L3.5 11.5 6.5 8.8z" fill="#222"/><path d="M3.5 8v2" stroke="#222" stroke-width="1"/></svg><svg style="left:914px;top:137px" width="7" height="12" viewBox="0 0 7 12"><path d="M0.5 3.2L3.5 0.5 6.5 3.2z" fill="#222"/><path d="M3.5 2v2" stroke="#222" stroke-width="1"/><path d="M0.5 8.8L3.5 11.5 6.5 8.8z" fill="#222"/><path d="M3.5 8v2" stroke="#222" stroke-width="1"/></svg><div style="left:693px;top:205px;width:83px;height:27px;border:3px solid #fa7d0a;box-sizing:border-box"></div>
</body></html>
